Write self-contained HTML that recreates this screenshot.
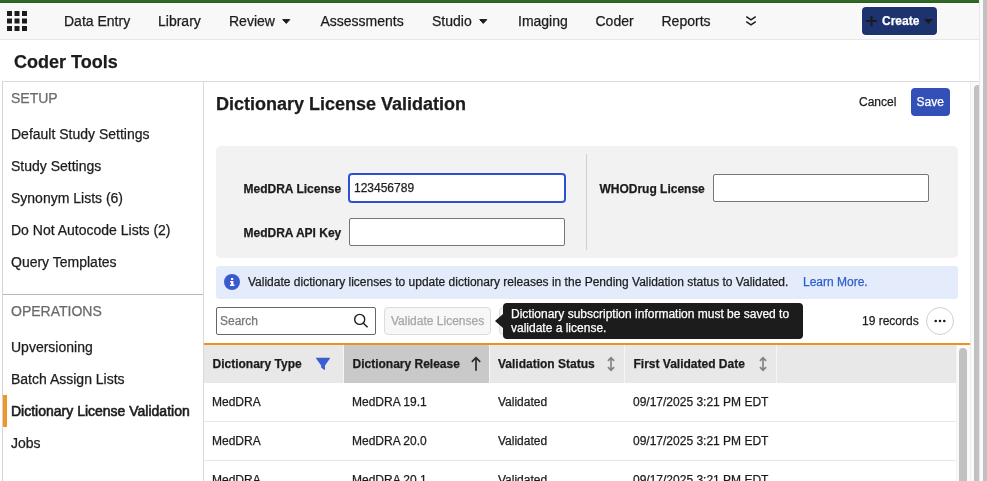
<!DOCTYPE html>
<html>
<head>
<meta charset="utf-8">
<title>Coder Tools</title>
<style>
*{box-sizing:border-box;margin:0;padding:0}
html,body{width:987px;height:481px;overflow:hidden;background:#fff}
body{font-family:"Liberation Sans",sans-serif;color:#1c1c1c;position:relative;-webkit-font-smoothing:antialiased}
.abs{position:absolute}
.t{position:absolute;white-space:nowrap;line-height:1;-webkit-text-stroke:0.25px}
.nav{font-size:14px;top:14px;color:#1c1c1c}
.side{font-size:14px;color:#1c1c1c;left:11px}
.hdr{font-size:14px;color:#6a6a6a;left:11px}
.lbl{font-size:12px;font-weight:700;color:#1c1c1c}
.c12{font-size:12px;color:#1c1c1c}
.inp{position:absolute;background:#fff;border:1px solid #767676;border-radius:2px}
.th{font-size:12px;font-weight:700;top:358px;color:#1c1c1c}
svg{position:absolute;overflow:visible}
</style>
</head>
<body>
<div id="w" style="position:absolute;left:0;top:0;width:987px;height:481px;overflow:hidden;will-change:transform">
<!-- top green bar + nav -->
<div class="abs" style="left:0;top:0;width:979px;height:3px;background:linear-gradient(#326827 0,#326827 60%,#245a17 100%)"></div>
<div class="abs" style="left:0;top:4px;width:979px;height:36px;background:#f8f8f8;border-bottom:1px solid #e6e6e6"></div>

<!-- app grid icon -->
<svg style="left:7px;top:11px" width="20" height="20" viewBox="0 0 20 20">
<g fill="#1c1c1c">
<rect x="0" y="0" width="5" height="5"/><rect x="7.5" y="0" width="5" height="5"/><rect x="15" y="0" width="5" height="5"/>
<rect x="0" y="7.5" width="5" height="5"/><rect x="7.5" y="7.5" width="5" height="5"/><rect x="15" y="7.5" width="5" height="5"/>
<rect x="0" y="15" width="5" height="5"/><rect x="7.5" y="15" width="5" height="5"/><rect x="15" y="15" width="5" height="5"/>
</g></svg>

<div class="t nav" style="left:64px">Data Entry</div>
<div class="t nav" style="left:158px">Library</div>
<div class="t nav" style="left:229px">Review</div>
<svg style="left:281.6px;top:19px" width="9" height="5" viewBox="0 0 9 5"><path d="M0.7 0.6H7.8L4.25 4.4Z" fill="#1c1c1c" stroke="#1c1c1c" stroke-width="1" stroke-linejoin="round"/></svg>
<div class="t nav" style="left:320.5px">Assessments</div>
<div class="t nav" style="left:432px">Studio</div>
<svg style="left:478.7px;top:19px" width="9" height="5" viewBox="0 0 9 5"><path d="M0.7 0.6H7.8L4.25 4.4Z" fill="#1c1c1c" stroke="#1c1c1c" stroke-width="1" stroke-linejoin="round"/></svg>
<div class="t nav" style="left:518px">Imaging</div>
<div class="t nav" style="left:595.5px">Coder</div>
<div class="t nav" style="left:661.5px">Reports</div>
<svg style="left:745px;top:15px" width="12" height="12" viewBox="0 0 12 12"><path d="M1.3 1.6L6 4.8L10.7 1.6M1.3 6.6L6 9.8L10.7 6.6" fill="none" stroke="#1c1c1c" stroke-width="1.5"/></svg>

<!-- Create button -->
<div class="abs" style="left:862px;top:7px;width:75px;height:28px;background:#1d336f;border-radius:4px;box-shadow:0 0 0 1px #fff"></div>
<svg style="left:866px;top:16px" width="11" height="11" viewBox="0 0 11 11"><path d="M5.5 0V10.2M0 5.1H10.8" fill="none" stroke="#1a1a1a" stroke-width="2"/></svg>
<div class="t" style="left:882px;top:15px;font-size:12px;font-weight:700;color:#fff">Create</div>
<svg style="left:924px;top:19px" width="9" height="5" viewBox="0 0 9 5"><path d="M0.8 0.5H8.2L4.5 4.4Z" fill="#1a1a1a" stroke="#1a1a1a" stroke-width="1" stroke-linejoin="round"/></svg>

<!-- page title -->
<div class="t" style="left:14px;top:53px;font-size:18px;font-weight:700;color:#1c1c1c">Coder Tools</div>

<!-- panel borders -->
<div class="abs" style="left:2px;top:81px;width:977px;height:1px;background:#d9d9d9"></div>
<div class="abs" style="left:2px;top:81px;width:1px;height:400px;background:#d4d4d4"></div>
<div class="abs" style="left:203px;top:81px;width:1px;height:400px;background:#d9d9d9"></div>
<div class="abs" style="left:3px;top:294px;width:200px;height:1px;background:#b9b9b9"></div>

<!-- sidebar -->
<div class="t hdr" style="top:91px">SETUP</div>
<div class="t side" style="top:127px">Default Study Settings</div>
<div class="t side" style="top:159px">Study Settings</div>
<div class="t side" style="top:191px">Synonym Lists (6)</div>
<div class="t side" style="top:223px">Do Not Autocode Lists (2)</div>
<div class="t side" style="top:255px">Query Templates</div>
<div class="t hdr" style="top:304px">OPERATIONS</div>
<div class="t side" style="top:340px">Upversioning</div>
<div class="t side" style="top:372px">Batch Assign Lists</div>
<div class="abs" style="left:3px;top:395px;width:4px;height:32px;background:#f0952a"></div>
<div class="t side" style="top:404px;-webkit-text-stroke:0.6px #1c1c1c">Dictionary License Validation</div>
<div class="t side" style="top:436px">Jobs</div>

<!-- main header -->
<div class="t" style="left:216px;top:95px;font-size:18px;font-weight:700;color:#1c1c1c">Dictionary License Validation</div>
<div class="t c12" style="left:859px;top:96px">Cancel</div>
<div class="abs" style="left:911px;top:88px;width:39px;height:28px;background:#3350b9;border-radius:4px"></div>
<div class="t" style="left:916.5px;top:96px;font-size:12px;color:#fff">Save</div>

<!-- license form -->
<div class="abs" style="left:216px;top:146px;width:742px;height:112px;background:#f2f2f2;border-radius:5px"></div>
<div class="abs" style="left:586px;top:154px;width:1px;height:96px;background:#cfcfcf"></div>
<div class="t lbl" style="left:243.5px;top:183px">MedDRA License</div>
<div class="inp" style="left:349px;top:174px;width:216px;height:28px;border-color:#2f4fd2;box-shadow:0 0 0 1px #2f4fd2;border-radius:3px"></div>
<div class="t c12" style="left:354px;top:182px">123456789</div>
<div class="t lbl" style="left:243.5px;top:227px">MedDRA API Key</div>
<div class="inp" style="left:349px;top:218px;width:216px;height:28px"></div>
<div class="t lbl" style="left:599.4px;top:183px">WHODrug License</div>
<div class="inp" style="left:713px;top:174px;width:216px;height:28px"></div>

<!-- info bar -->
<div class="abs" style="left:216px;top:266px;width:742px;height:33px;background:#e4ecfc;border-radius:3px"></div>
<svg style="left:224px;top:274px" width="16" height="16" viewBox="0 0 16 16"><circle cx="8" cy="8" r="8" fill="#3a5bd0"/><path d="M7 4h2.2v2H7zM6 7h3.4v3.6h1v1.5H6v-1.5h1.1V8.5H6z" fill="#fff"/></svg>
<div class="t c12" style="left:248px;top:276px">Validate dictionary licenses to update dictionary releases in the Pending Validation status to Validated.</div>
<div class="t c12" style="left:803px;top:276px;color:#2e60cc">Learn More.</div>

<!-- toolbar -->
<div class="inp" style="left:216px;top:307px;width:160px;height:28px;border-color:#666"></div>
<div class="t c12" style="left:220px;top:315px;color:#777">Search</div>
<svg style="left:353px;top:313px" width="16" height="16" viewBox="0 0 16 16"><circle cx="6.7" cy="6.4" r="5" fill="none" stroke="#1c1c1c" stroke-width="1.4"/><path d="M10.3 10.2L14.6 14.2" stroke="#1c1c1c" stroke-width="1.5" fill="none"/></svg>
<div class="abs" style="left:384px;top:307px;width:107px;height:28px;background:#f7f7f7;border:1px solid #dcdcdc;border-radius:4px"></div>
<div class="t c12" style="left:391px;top:315px;color:#a6a6a6">Validate Licenses</div>
<div class="abs" style="left:499px;top:307px;width:40px;height:28px;background:#f2f2f2;border:1px solid #dcdcdc;border-radius:4px"></div>
<!-- tooltip -->
<div class="abs" style="left:503px;top:303px;width:300px;height:36px;background:#1c1c1c;border-radius:4px"></div>
<svg style="left:495px;top:314px" width="8" height="14" viewBox="0 0 8 14"><path d="M8 0V14L0 7Z" fill="#1c1c1c"/></svg>
<div class="t" style="left:511px;top:308px;font-size:12px;color:#fff;line-height:13.5px;white-space:normal;width:290px">Dictionary subscription information must be saved to<br>validate a license.</div>
<div class="t c12" style="left:862px;top:315px">19 records</div>
<div class="abs" style="left:926px;top:307px;width:28px;height:28px;border:1px solid #cfcfcf;border-radius:50%;background:#fff"></div>
<svg style="left:934px;top:319px" width="12" height="4" viewBox="0 0 12 4"><circle cx="1.7" cy="2" r="1.3" fill="#1c1c1c"/><circle cx="6" cy="2" r="1.3" fill="#1c1c1c"/><circle cx="10.3" cy="2" r="1.3" fill="#1c1c1c"/></svg>

<!-- table -->
<div class="abs" style="left:204px;top:343px;width:766px;height:2px;background:#f0901e"></div>
<div class="abs" style="left:204px;top:345px;width:752px;height:38px;background:#e8e8e8"></div>
<div class="abs" style="left:344px;top:345px;width:145px;height:38px;background:#c9c9c9"></div>
<div class="abs" style="left:343px;top:345px;width:1px;height:38px;background:#f6f6f6"></div>
<div class="abs" style="left:489px;top:345px;width:1px;height:38px;background:#f6f6f6"></div>
<div class="abs" style="left:624px;top:345px;width:1px;height:38px;background:#f6f6f6"></div>
<div class="abs" style="left:776px;top:345px;width:1px;height:38px;background:#f6f6f6"></div>
<div class="t th" style="left:212.5px">Dictionary Type</div>
<svg style="left:316px;top:357px" width="14" height="14" viewBox="0 0 14 14"><path d="M0.4 0.8H13.6Q14.4 0.8 13.9 1.5L9 8.4V12.3Q9 13.2 8.2 12.8L5.4 10.7Q5.1 10.5 5.1 10.1V8.4L0.1 1.5Q-0.4 0.8 0.4 0.8Z" fill="#3a5dd2"/></svg>
<div class="t th" style="left:352.5px">Dictionary Release</div>
<svg style="left:471px;top:356px" width="10" height="15" viewBox="0 0 10 15"><path d="M5 14.8V2M0.8 5.8L5 1.6L9.2 5.8" fill="none" stroke="#2a2a2a" stroke-width="1.7"/></svg>
<div class="t th" style="left:498px">Validation Status</div>
<svg style="left:607px;top:356px" width="8" height="15" viewBox="0 0 8 15"><path d="M4 2V14M0.9 4.9L4 1.8L7.1 4.9M0.9 11.1L4 14.2L7.1 11.1" fill="none" stroke="#858585" stroke-width="1.7"/></svg>
<div class="t th" style="left:633.5px">First Validated Date</div>
<svg style="left:759px;top:356px" width="8" height="15" viewBox="0 0 8 15"><path d="M4 2V14M0.9 4.9L4 1.8L7.1 4.9M0.9 11.1L4 14.2L7.1 11.1" fill="none" stroke="#858585" stroke-width="1.7"/></svg>

<!-- rows -->
<div class="abs" style="left:204px;top:421px;width:752px;height:1px;background:#e6e6e6"></div>
<div class="abs" style="left:204px;top:460px;width:752px;height:1px;background:#e6e6e6"></div>
<div class="t c12" style="left:212px;top:396px">MedDRA</div>
<div class="t c12" style="left:352px;top:396px">MedDRA 19.1</div>
<div class="t c12" style="left:498px;top:396px">Validated</div>
<div class="t c12" style="left:633px;top:396px">09/17/2025 3:21 PM EDT</div>
<div class="t c12" style="left:212px;top:435px">MedDRA</div>
<div class="t c12" style="left:352px;top:435px">MedDRA 20.0</div>
<div class="t c12" style="left:498px;top:435px">Validated</div>
<div class="t c12" style="left:633px;top:435px">09/17/2025 3:21 PM EDT</div>
<div class="t c12" style="left:212px;top:474px">MedDRA</div>
<div class="t c12" style="left:352px;top:474px">MedDRA 20.1</div>
<div class="t c12" style="left:498px;top:474px">Validated</div>
<div class="t c12" style="left:633px;top:474px">09/17/2025 3:21 PM EDT</div>

<!-- table scrollbar -->
<div class="abs" style="left:956px;top:345px;width:14px;height:136px;background:#fafafa;border-left:1px solid #f3f3f3"></div>
<div class="abs" style="left:959px;top:348px;width:8px;height:140px;background:#c1c1c1;border-radius:4px"></div>
<!-- panel scrollbar -->
<div class="abs" style="left:970px;top:82px;width:9px;height:399px;background:#fafafa;border-left:1px solid #ececec"></div>
<div class="abs" style="left:974px;top:85px;width:12px;height:420px;background:#c1c1c1;border-radius:4px"></div>
<!-- page scrollbar -->
<div class="abs" style="left:979px;top:0;width:8px;height:481px;background:#fafafa;border-left:1px solid #e8e8e8"></div>
<div class="abs" style="left:983px;top:-10px;width:12px;height:520px;background:#c1c1c1"></div>
</div>
</body>
</html>
